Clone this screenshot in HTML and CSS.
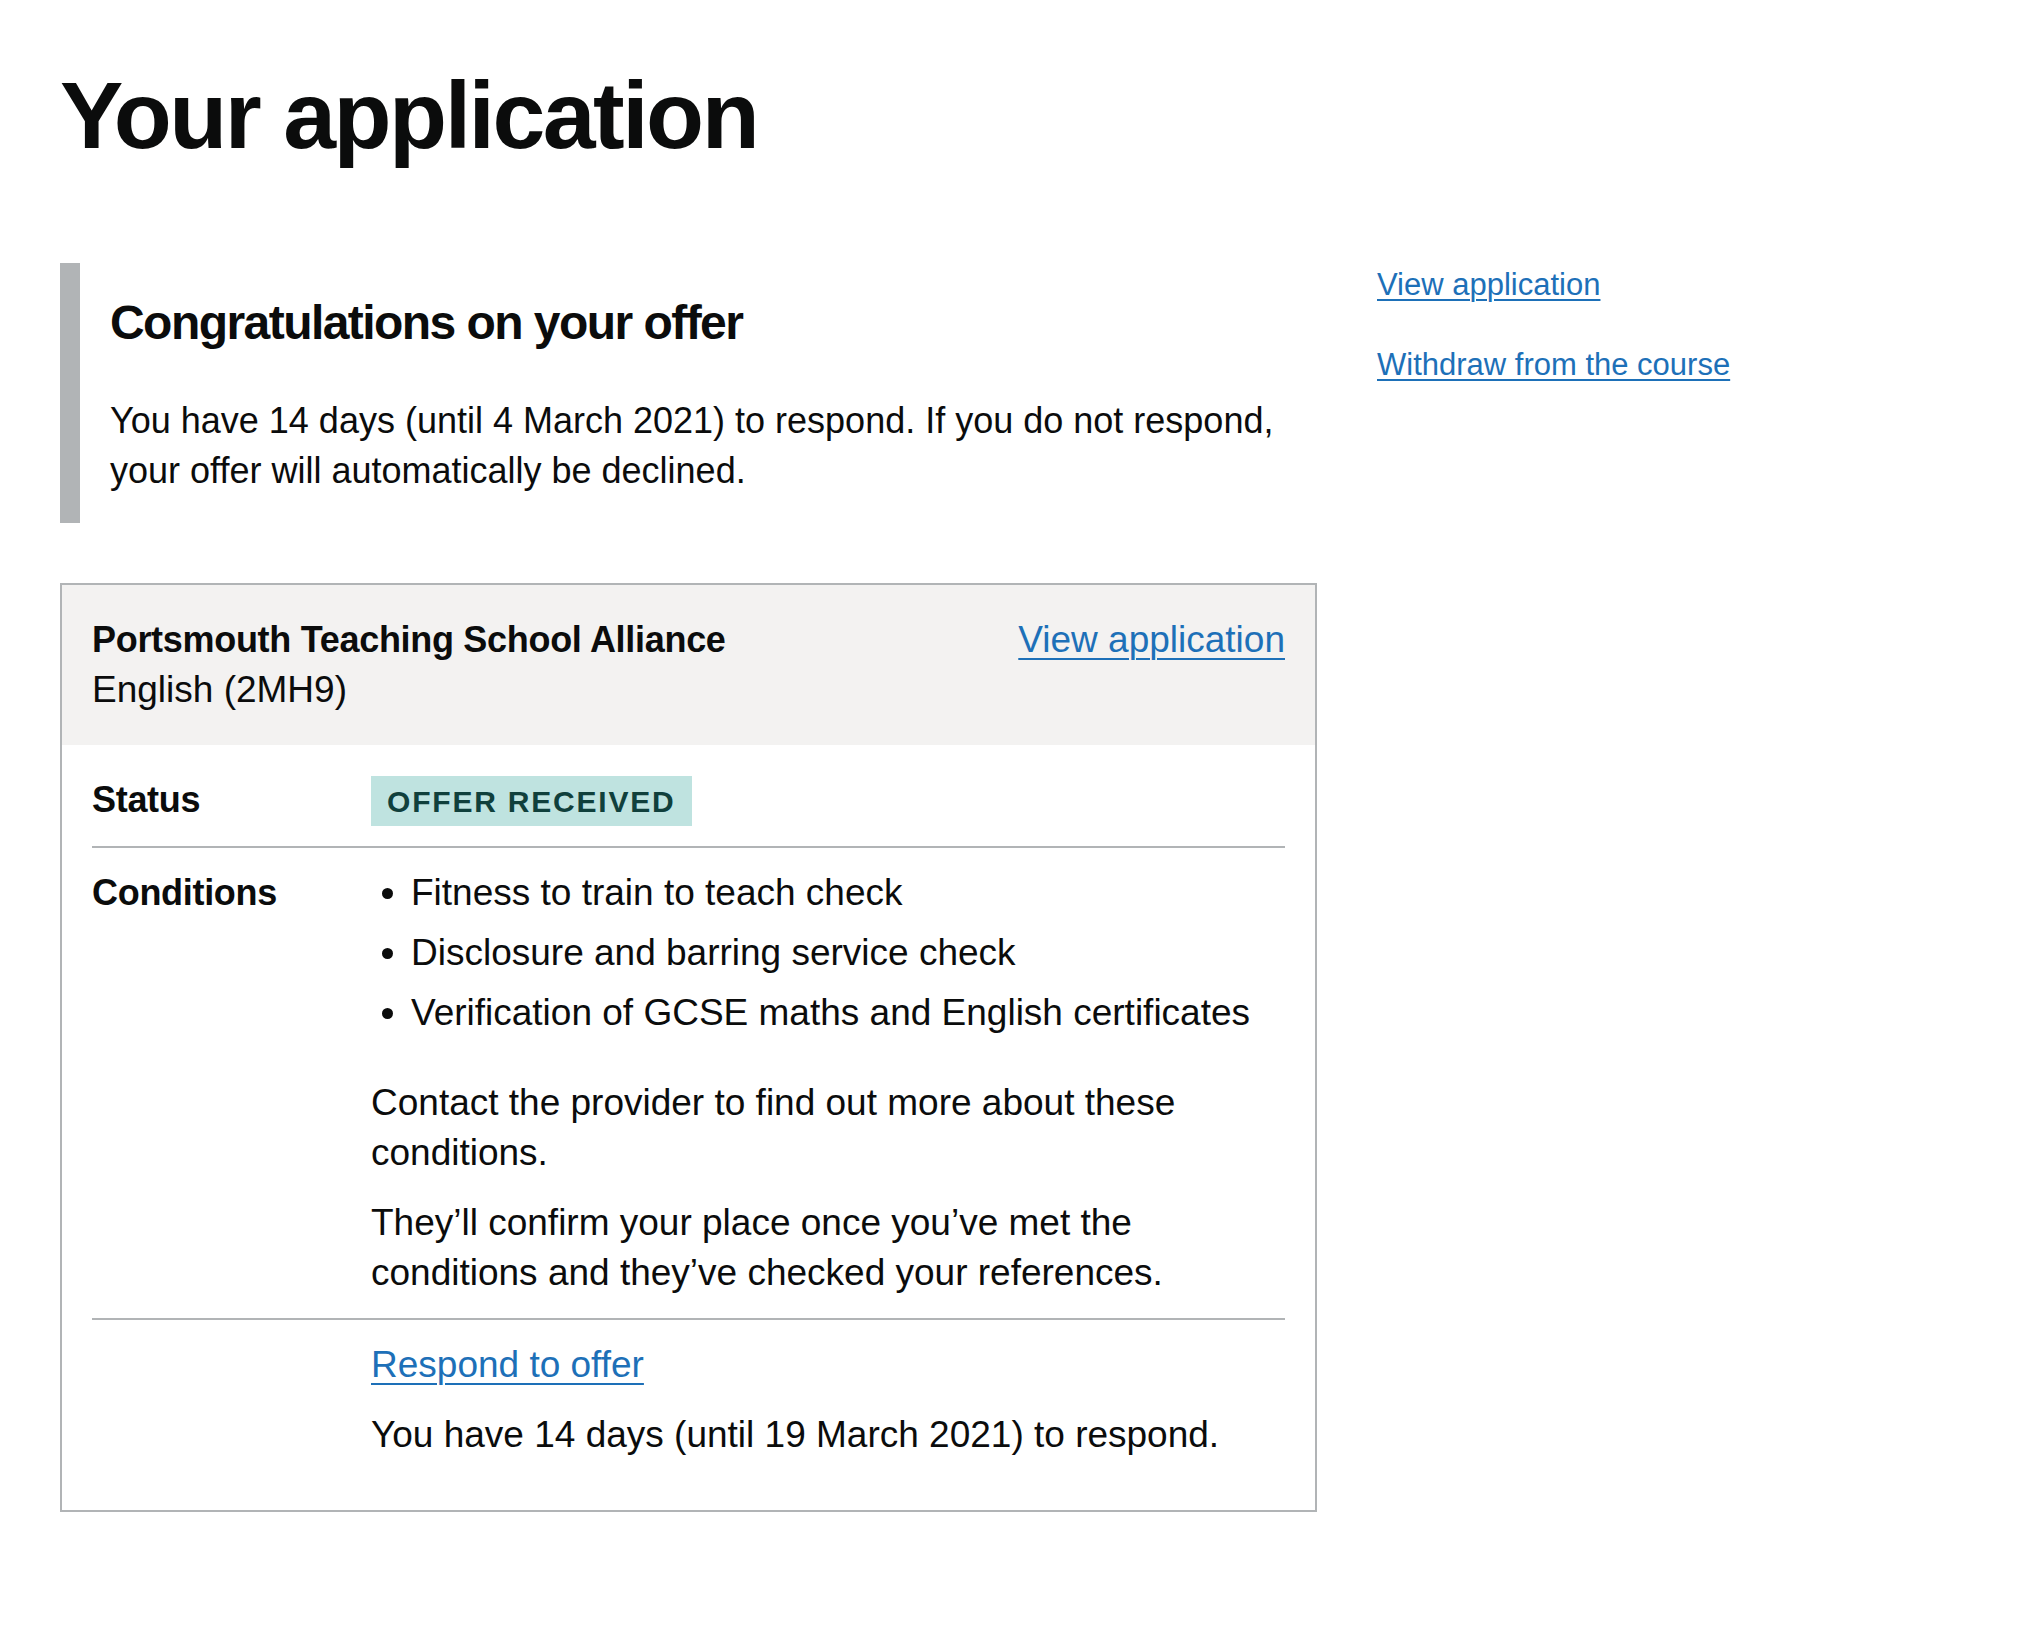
FILE: index.html
```html
<!DOCTYPE html>
<html lang="en">
<head>
<meta charset="utf-8">
<title>Your application</title>
<link rel="stylesheet" href="styles.css">
</head>
<body>
<main class="page">
  <h1 class="heading-xl">Your application</h1>
  <div class="layout">
    <div class="main-col">
      <div class="inset">
        <h2 class="inset-heading">Congratulations on your offer</h2>
        <p class="inset-body">You have 14 days (until 4 March 2021) to respond. If you do not respond, your offer will automatically be declined.</p>
      </div>
      <section class="card">
        <header class="card-header">
          <div class="card-title">
            <p class="provider">Portsmouth Teaching School Alliance</p>
            <p class="course">English (2MH9)</p>
          </div>
          <a class="link card-link" href="#">View application</a>
        </header>
        <dl class="summary">
          <div class="row">
            <dt class="key">Status</dt>
            <dd class="value"><strong class="tag">Offer received</strong></dd>
          </div>
          <div class="row">
            <dt class="key">Conditions</dt>
            <dd class="value">
              <ul class="bullets">
                <li>Fitness to train to teach check</li>
                <li>Disclosure and barring service check</li>
                <li>Verification of GCSE maths and English certificates</li>
              </ul>
              <p class="value-p">Contact the provider to find out more about these conditions.</p>
              <p class="value-p">They’ll confirm your place once you’ve met the conditions and they’ve checked your references.</p>
            </dd>
          </div>
          <div class="row row-last">
            <dt class="key"></dt>
            <dd class="value">
              <p class="value-p"><a class="link" href="#">Respond to offer</a></p>
              <p class="value-p">You have 14 days (until 19 March 2021) to respond.</p>
            </dd>
          </div>
        </dl>
      </section>
    </div>
    <aside class="side">
      <p class="side-p"><a class="link side-link" href="#">View application</a></p>
      <p class="side-p"><a class="link side-link" href="#">Withdraw from the course</a></p>
    </aside>
  </div>
</main>
</body>
</html>
```
FILE: styles.css
```css
html, body {
  margin: 0;
  padding: 0;
  background: #ffffff;
}

body {
  font-family: "Liberation Sans", Arial, sans-serif;
  color: #0b0c0c;
}

.page {
  padding: 65px 60px 0;
}

.heading-xl {
  margin: 0 0 98px;
  font-size: 95px;
  line-height: 100px;
  font-weight: 700;
  letter-spacing: -2.5px;
}

.layout {
  display: grid;
  grid-template-columns: 1257px 1fr;
  column-gap: 60px;
  align-items: start;
}

.inset {
  border-left: 20px solid #b1b4b6;
  padding: 30px 30px 27px;
  margin-bottom: 60px;
}

.inset-heading {
  margin: 0 0 43px;
  font-size: 48px;
  line-height: 60px;
  font-weight: 700;
  letter-spacing: -1.55px;
}

.inset-body {
  margin: 0;
  font-size: 36px;
  line-height: 50px;
}

.card {
  border: 2px solid #b1b4b6;
}

.card-header {
  background: #f3f2f1;
  padding: 30px;
  display: flex;
  justify-content: space-between;
  align-items: flex-start;
}

.provider {
  margin: 0;
  font-size: 36px;
  line-height: 50px;
  font-weight: 700;
  letter-spacing: -0.3px;
}

.course {
  margin: 0;
  font-size: 37px;
  line-height: 50px;
}

.link {
  color: #1d70b8;
  text-decoration: underline;
  text-decoration-thickness: 2px;
  text-underline-offset: 0.16em;
}

.card-link {
  font-size: 37px;
  line-height: 50px;
}

.summary {
  margin: 0;
  padding: 10px 30px 30px;
}

.row {
  display: grid;
  grid-template-columns: 279px 1fr;
  border-bottom: 2px solid #b1b4b6;
}

.row-last {
  border-bottom: 0;
}

.key {
  padding: 20px 0;
  font-size: 36px;
  line-height: 50px;
  font-weight: 700;
  letter-spacing: -0.3px;
}

.value {
  margin: 0;
  padding: 20px 0;
  font-size: 37px;
  line-height: 50px;
}

.tag {
  display: inline-block;
  background: #bfe3e0;
  color: #10403c;
  font-weight: 700;
  font-size: 30px;
  line-height: 32px;
  padding: 10px 16px 8px;
  letter-spacing: 1.8px;
  text-transform: uppercase;
}

.bullets {
  margin: 0 0 40px;
  padding-left: 40px;
  list-style-type: disc;
}

.bullets li {
  margin-bottom: 10px;
}

.value-p {
  margin: 0 0 20px;
}

.value-p:last-child {
  margin-bottom: 0;
}

.side {
  padding-top: 2px;
}

.side-p {
  margin: 0 0 40px;
  font-size: 31px;
  line-height: 40px;
}

.side-link {
  text-underline-offset: 0.14em;
}
```
